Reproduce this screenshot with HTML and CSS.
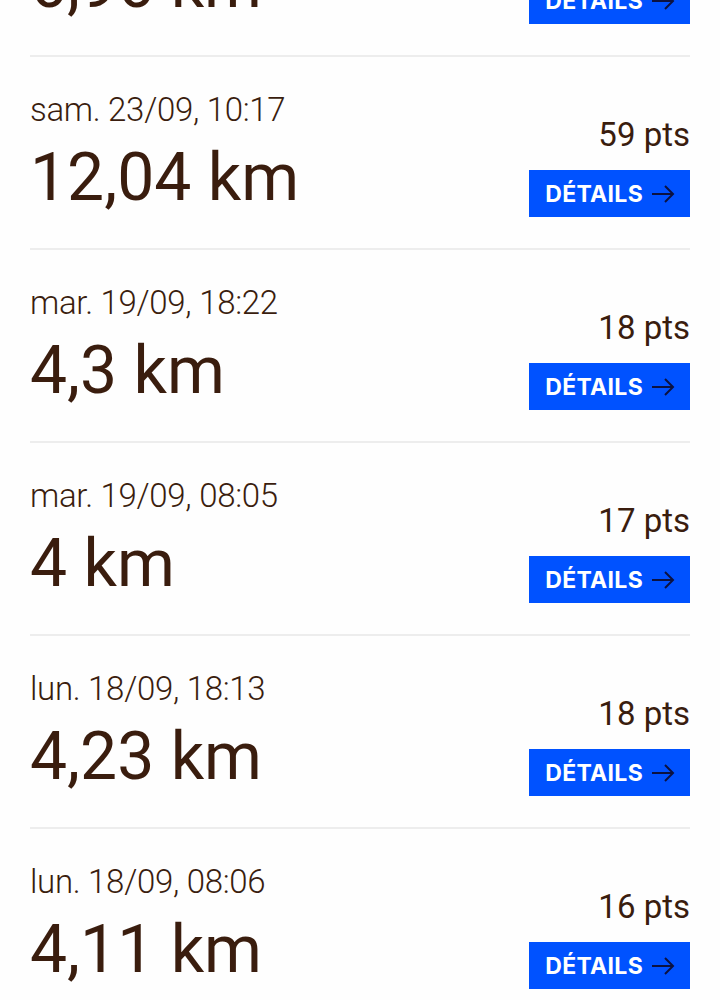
FILE: index.html
```html
<!DOCTYPE html>
<html lang="fr">
<head>
    <meta charset="utf-8">
    <title>Mes sorties</title>
    <link rel="stylesheet" href="styles.css">
</head>
<body>
    <ul class="sorties">
        <li class="sortie">
            <div class="infos">
                <p class="date">dim. 24/09, 09:40</p>
                <p class="distance">6,96 km</p>
            </div>
            <div class="actions">
                <p class="points">28 pts</p>
                <a class="details" href="#">DÉTAILS <svg viewBox="0 0 24 24"><path d="M1 12h21M14 4l8 8-8 8"/></svg></a>
            </div>
        </li>
        <li class="sortie">
            <div class="infos">
                <p class="date">sam. 23/09, 10:17</p>
                <p class="distance">12,04 km</p>
            </div>
            <div class="actions">
                <p class="points">59 pts</p>
                <a class="details" href="#">DÉTAILS <svg viewBox="0 0 24 24"><path d="M1 12h21M14 4l8 8-8 8"/></svg></a>
            </div>
        </li>
        <li class="sortie">
            <div class="infos">
                <p class="date">mar. 19/09, 18:22</p>
                <p class="distance">4,3 km</p>
            </div>
            <div class="actions">
                <p class="points">18 pts</p>
                <a class="details" href="#">DÉTAILS <svg viewBox="0 0 24 24"><path d="M1 12h21M14 4l8 8-8 8"/></svg></a>
            </div>
        </li>
        <li class="sortie">
            <div class="infos">
                <p class="date">mar. 19/09, 08:05</p>
                <p class="distance">4 km</p>
            </div>
            <div class="actions">
                <p class="points">17 pts</p>
                <a class="details" href="#">DÉTAILS <svg viewBox="0 0 24 24"><path d="M1 12h21M14 4l8 8-8 8"/></svg></a>
            </div>
        </li>
        <li class="sortie">
            <div class="infos">
                <p class="date">lun. 18/09, 18:13</p>
                <p class="distance">4,23 km</p>
            </div>
            <div class="actions">
                <p class="points">18 pts</p>
                <a class="details" href="#">DÉTAILS <svg viewBox="0 0 24 24"><path d="M1 12h21M14 4l8 8-8 8"/></svg></a>
            </div>
        </li>
        <li class="sortie">
            <div class="infos">
                <p class="date">lun. 18/09, 08:06</p>
                <p class="distance">4,11 km</p>
            </div>
            <div class="actions">
                <p class="points">16 pts</p>
                <a class="details" href="#">DÉTAILS <svg viewBox="0 0 24 24"><path d="M1 12h21M14 4l8 8-8 8"/></svg></a>
            </div>
        </li>
    </ul>
</body>
</html>
```

FILE: styles.css
```css
body {
    margin: 0;
    background-color: #fefefe;
    color: #3a1d0e;
    font-family: Roboto, "Noto Sans", sans-serif;
    overflow: hidden;
}
p {
    margin: 0;
}
.sorties {
    list-style: none;
    margin: -136px 30px 0 30px;
    padding: 0;
}
.sortie {
    display: flex;
    justify-content: space-between;
    padding: 33px 0 30px 0;
    border-bottom: 2px solid #ededed;
}
.date {
    font-size: 33px;
    font-weight: 300;
    line-height: 40px;
    letter-spacing: -0.3px;
}
.distance {
    font-size: 66px;
    font-weight: 400;
    line-height: 80px;
    margin-top: 8px;
}
.actions {
    display: flex;
    flex-direction: column;
    align-items: flex-end;
    padding-top: 25px;
}
.points {
    font-size: 33px;
    line-height: 40px;
}
.details {
    display: flex;
    align-items: center;
    gap: 8px;
    height: 47px;
    margin-top: 15px;
    padding: 1px 15px 0 16px;
    box-sizing: border-box;
    background-color: #0052ff;
    color: #fff;
    font-family: Inter, "Noto Sans", sans-serif;
    font-size: 23px;
    font-weight: 700;
    letter-spacing: 0.3px;
    text-decoration: none;
}
.details svg {
    width: 24px;
    height: 24px;
    fill: none;
    stroke: #0c1240;
    stroke-width: 2;
}
```
